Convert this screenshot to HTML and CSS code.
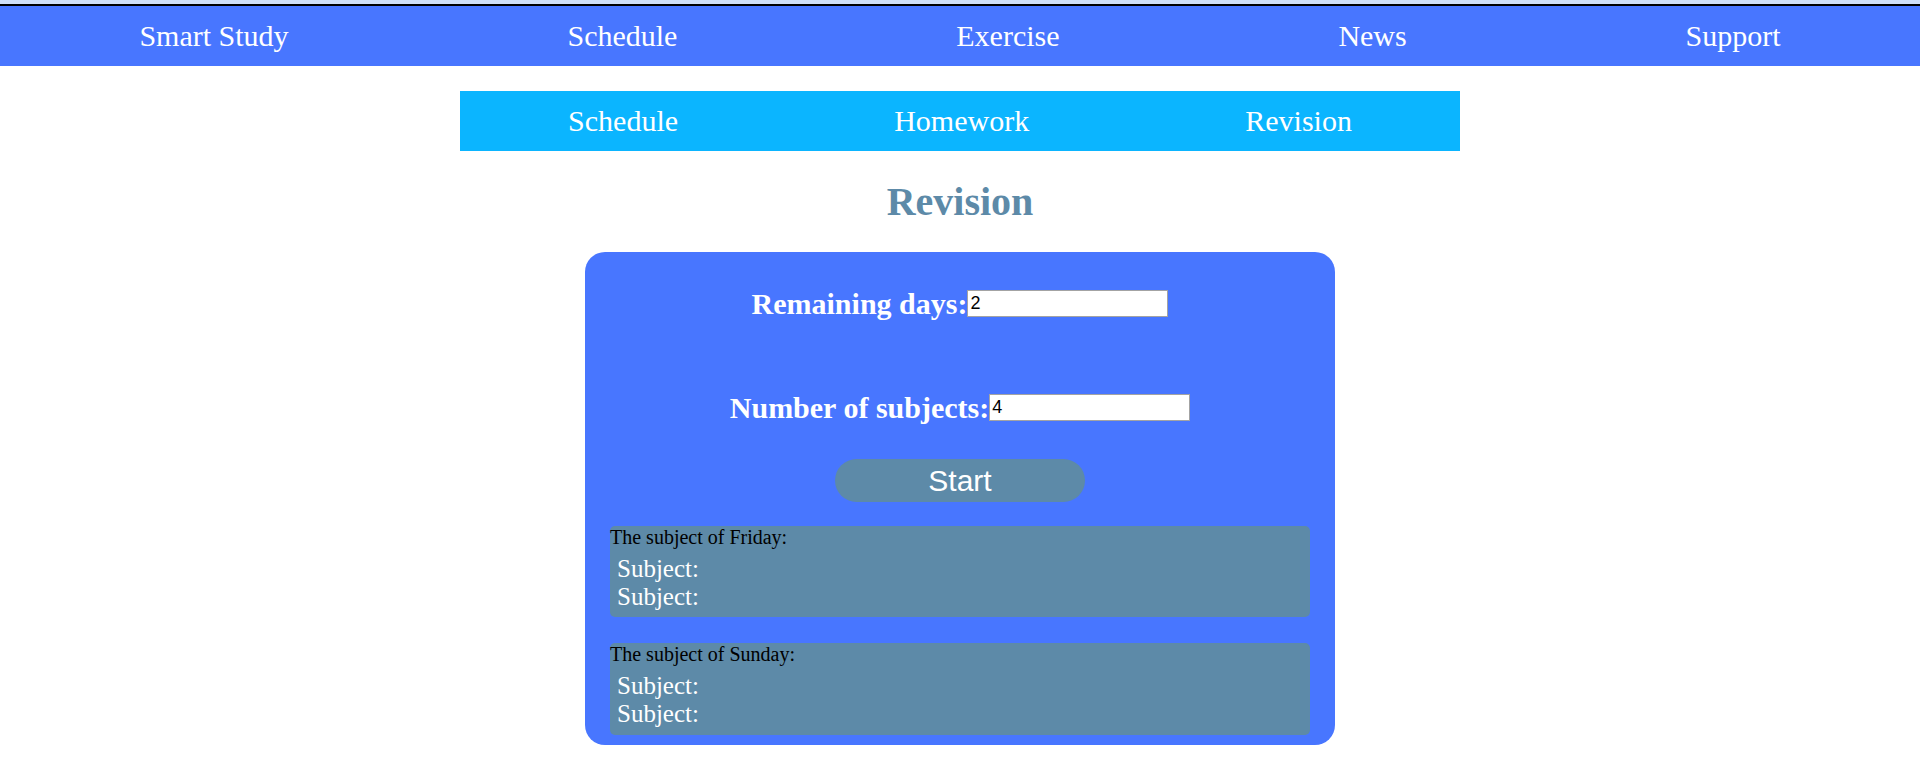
FILE: index.html
```html
<!DOCTYPE html>
<html lang="en">
<head>
<meta charset="utf-8">
<title>Smart Study - Revision</title>
<link rel="stylesheet" href="styles.css">
</head>
<body>
<div class="topline"></div>
<nav class="main-nav">
  <a href="#">Smart Study</a>
  <a href="#">Schedule</a>
  <a href="#">Exercise</a>
  <a href="#">News</a>
  <a href="#">Support</a>
</nav>
<nav class="sub-nav">
  <a href="#">Schedule</a>
  <a href="#">Homework</a>
  <a href="#">Revision</a>
</nav>
<h1 class="title">Revision</h1>
<section class="card">
  <div class="field field-first">
    <label class="field-label" for="days">Remaining days:</label>
    <input class="field-input" id="days" type="text" value="2">
  </div>
  <div class="field field-second">
    <label class="field-label" for="subjects">Number of subjects:</label>
    <input class="field-input" id="subjects" type="text" value="4">
  </div>
  <button class="start-btn" type="button">Start</button>
  <div class="day-box">
    <div class="day-title">The subject of Friday:</div>
    <div class="day-subjects">
      <div class="subject">Subject:</div>
      <div class="subject">Subject:</div>
    </div>
  </div>
  <div class="day-box day-box-second">
    <div class="day-title">The subject of Sunday:</div>
    <div class="day-subjects">
      <div class="subject">Subject:</div>
      <div class="subject">Subject:</div>
    </div>
  </div>
</section>
</body>
</html>
```
FILE: styles.css
```css
html, body {
  margin: 0;
  padding: 0;
  background: #ffffff;
}

body {
  font-family: "Liberation Serif", "Times New Roman", serif;
  font-size: 20px;
}

.topline {
  height: 4px;
  background: #cfdff7;
  border-bottom: 2px solid #000000;
}

.main-nav {
  display: flex;
  justify-content: space-around;
  align-items: center;
  height: 60px;
  background: #4876ff;
}

.main-nav a,
.sub-nav a {
  color: #ffffff;
  text-decoration: none;
  font-size: 30px;
  line-height: normal;
}

.sub-nav {
  display: flex;
  justify-content: space-around;
  align-items: center;
  width: 1000px;
  height: 60px;
  margin: 25px auto 0;
  background: #0bb5ff;
}

.title {
  margin: 28px 0 27px;
  text-align: center;
  font-size: 40px;
  font-weight: bold;
  line-height: 46px;
  color: #5d8aa8;
}

.card {
  box-sizing: border-box;
  width: 750px;
  margin: 0 auto;
  padding: 35px 25px 10px;
  background: #4876ff;
  border-radius: 20px;
  display: flex;
  flex-direction: column;
  align-items: center;
}

.field {
  display: flex;
  align-items: center;
  justify-content: center;
  height: 33px;
}

.field-second {
  margin-top: 71px;
}

.field-label {
  color: #ffffff;
  font-size: 30px;
  font-weight: bold;
}

.field-input {
  box-sizing: border-box;
  width: 201px;
  height: 27px;
  margin: 0;
  padding: 1px 2px;
  border: 1px solid #a3a3a3;
  background: #ffffff;
  color: #000000;
  font-family: "Liberation Sans", Arial, sans-serif;
  font-size: 18px;
  outline: none;
}

.start-btn {
  width: 250px;
  height: 43px;
  margin-top: 35px;
  padding: 0;
  border: none;
  border-radius: 22px;
  background: #5d8aa8;
  color: #ffffff;
  font-family: "Liberation Sans", Arial, sans-serif;
  font-size: 30px;
  line-height: 43px;
}

.day-box {
  box-sizing: border-box;
  width: 700px;
  height: 91px;
  margin-top: 24px;
  background: #5d8aa8;
  border-radius: 5px;
}

.day-box-second {
  margin-top: 26px;
  height: 92px;
}

.day-title {
  color: #000000;
  font-size: 20px;
  line-height: 23px;
}

.day-subjects {
  padding: 6px 7px 0;
}

.subject {
  color: #ffffff;
  font-size: 25px;
  line-height: 28px;
}
```
